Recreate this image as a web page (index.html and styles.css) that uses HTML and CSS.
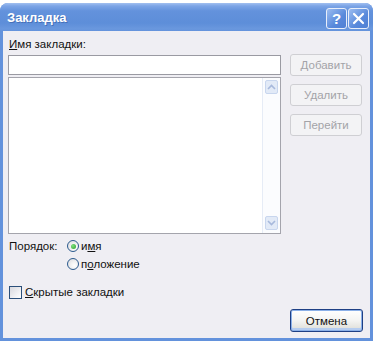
FILE: index.html
```html
<!DOCTYPE html>
<html lang="ru">
<head>
<meta charset="utf-8">
<title>Закладка</title>
<link rel="stylesheet" href="styles.css">
</head>
<body>
<div class="dialog">
  <div class="titlebar">
    <span class="title">Закладка</span>
    <div class="tbtns">
      <span class="tbtn help">?</span>
      <span class="tbtn close"><svg width="13" height="13" viewBox="0 0 13 13"><path d="M2 2 L11 11 M11 2 L2 11" stroke="#fff" stroke-width="2.2" stroke-linecap="round"/></svg></span>
    </div>
  </div>
  <div class="client">
    <div class="label"><u>И</u>мя закладки:</div>
    <div class="main">
      <div class="left">
        <div class="input"></div>
        <div class="listbox">
          <div class="lb-area"></div>
          <div class="vscroll">
            <div class="arrow"><svg width="9" height="6" viewBox="0 0 9 6"><path d="M1 5 L4.5 1.5 L8 5" fill="none" stroke="#a7b9dc" stroke-width="1.6"/></svg></div>
            <div class="track"></div>
            <div class="arrow"><svg width="9" height="6" viewBox="0 0 9 6"><path d="M1 1 L4.5 4.5 L8 1" fill="none" stroke="#a7b9dc" stroke-width="1.6"/></svg></div>
          </div>
        </div>
      </div>
      <div class="right">
        <div class="btn disabled">Добавить</div>
        <div class="btn disabled">Удалить</div>
        <div class="btn disabled">Перейти</div>
      </div>
    </div>
    <div class="order">
      <div class="order-label">Порядок:</div>
      <div class="radios">
        <div class="opt"><span class="radio checked"></span><span>и<u>м</u>я</span></div>
        <div class="opt"><span class="radio"></span><span>п<u>о</u>ложение</span></div>
      </div>
    </div>
    <div class="check"><span class="box"></span><span><u>С</u>крытые закладки</span></div>
    <div class="footer"><div class="btn default">Отмена</div></div>
  </div>
</div>
</body>
</html>
```

FILE: styles.css
```css
* { box-sizing: border-box; }
html, body { margin: 0; padding: 0; background: #fff; }
body {
  font-family: "Liberation Sans", Arial, sans-serif;
  font-size: 11.5px;
  color: #111;
}
u { text-decoration: underline; text-underline-offset: 1px; }

.dialog {
  margin-top: 3px;
  width: 373px;
  height: 338px;
  border-radius: 8px 8px 0 0;
  background: #6392dc;
  padding: 0 3px 3px 3px;
  display: flex;
  flex-direction: column;
}
.titlebar {
  height: 28px;
  margin: 0 -3px;
  padding: 0 4px 0 7px;
  border-radius: 8px 8px 0 0;
  background: linear-gradient(#a2c0f0 0, #7ca4e6 3px, #6392dc 8px, #5d8ed9 20px, #6a98de 26px, #6392dc 28px);
  display: flex;
  align-items: center;
  justify-content: space-between;
}
.title {
  color: #fff;
  font-weight: bold;
  font-size: 13px;
  text-shadow: 1px 1px 0 #4670b8;
  padding-top: 1px;
}
.tbtns { display: flex; gap: 1px; padding-top: 2px; }
.tbtn {
  width: 21px;
  height: 21px;
  border: 1px solid #e8eefa;
  border-radius: 3px;
  background: linear-gradient(135deg, #9bbcf0, #5889db 60%, #5080d4);
  display: flex;
  align-items: center;
  justify-content: center;
  color: #fff;
  font-weight: bold;
  font-size: 15px;
}
.client {
  flex: 1;
  background: #efeef3;
  padding: 0 8px 6px 5px;
  display: flex;
  flex-direction: column;
}
.label { margin-top: 7px; height: 13px; line-height: 13px; padding-left: 1px; }
.main { display: flex; gap: 9px; margin-top: 3px; }
.left { width: 273px; padding-top: 1px; display: flex; flex-direction: column; gap: 2px; }
.input {
  height: 20px;
  background: #fff;
  border: 1px solid #9a9aa2;
}
.listbox {
  height: 157px;
  background: #fff;
  border: 1px solid #a4a4ac;
  display: flex;
}
.lb-area { flex: 1; }
.vscroll {
  width: 18px;
  border-left: 1px solid #e6ecf6;
  background: #fbfcfe;
  display: flex;
  flex-direction: column;
  padding: 2px 1px 3px 2px;
}
.arrow {
  height: 14px;
  width: 13px;
  background: #e2eaf7;
  border: 1px solid #c8d6ee;
  border-radius: 2px;
  display: flex;
  align-items: center;
  justify-content: center;
}
.track { flex: 1; }
.right { width: 72px; display: flex; flex-direction: column; gap: 8px; }
.btn {
  height: 22px;
  border-radius: 3px;
  display: flex;
  align-items: center;
  justify-content: center;
}
.btn.disabled {
  border: 1px solid #cfcfd3;
  background: #f3f3f5;
  color: #a3a3a8;
}
.order { display: flex; margin-top: 4px; }
.order-label { width: 59px; padding-left: 1px; height: 16px; line-height: 16px; }
.radios { display: flex; flex-direction: column; gap: 2px; }
.opt { display: flex; align-items: center; gap: 2px; height: 16px; }
.radio {
  width: 12px;
  height: 12px;
  border-radius: 50%;
  border: 1px solid #2b5a8e;
  background: radial-gradient(circle at 65% 65%, #fff 0, #f2f2f2 40%, #d8d8dc 100%);
  display: flex;
  align-items: center;
  justify-content: center;
}
.radio.checked::after {
  content: "";
  width: 5px;
  height: 5px;
  border-radius: 50%;
  background: radial-gradient(circle at 35% 35%, #7ee07e, #2ca02c);
}
.check { display: flex; align-items: center; gap: 3px; margin-top: 12px; height: 16px; padding-left: 1px; }
.box {
  width: 13px;
  height: 13px;
  border: 1px solid #2b4f7a;
  background: linear-gradient(135deg, #d8d8de, #f4f4f6 70%, #fff);
}
.footer { margin-top: auto; display: flex; justify-content: flex-end; margin-right: -1px; }
.btn.default {
  width: 73px;
  height: 23px;
  border: 1px solid #1e3f84;
  box-shadow: inset 0 0 0 1px #8bb0e8, inset 0 -2px 0 1px #b6cdf0;
  background: linear-gradient(#ffffff, #f4f4f2 50%, #dcdcd6);
  border-radius: 3px;
}
```
